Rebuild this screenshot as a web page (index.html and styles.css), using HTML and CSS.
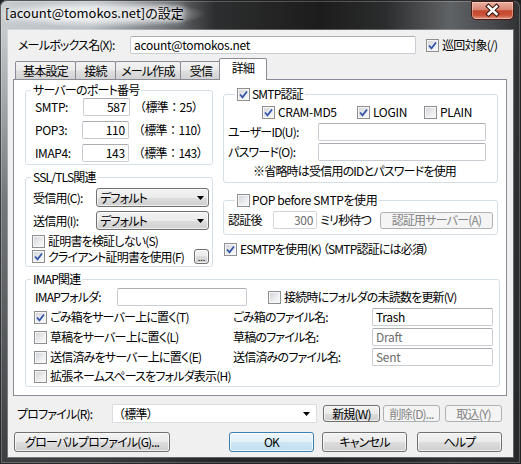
FILE: index.html
```html
<!DOCTYPE html>
<html lang="ja">
<head>
<meta charset="utf-8">
<title>設定</title>
<link rel="stylesheet" href="styles.css">
</head>
<body>
<div class="window">
  <div class="titlebar">
    <span class="title">[acount@tomokos.net]の設定</span>
    <span class="close"><svg width="41" height="17" viewBox="0 0 41 17"><path class="x-out" d="M16.5 4.5 L24.5 12 M24.5 4.5 L16.5 12"/><path class="x-in" d="M16.5 4.5 L24.5 12 M24.5 4.5 L16.5 12"/></svg></span>
  </div>
  <div class="client">
    <div class="mailbox">
      <span class="mb-label">メールボックス名(X):</span>
      <span class="edit mb-edit">acount@tomokos.net</span>
      <span class="check mb-check"><span class="cb on"><svg width="11" height="11" viewBox="0 0 11 11"><path d="M2 5.5 L4.5 8.3 L9 2.5"/></svg></span>巡回対象(/)</span>
    </div>
    <div class="tabs">
      <span class="tab t1">基本設定</span>
      <span class="tab t2">接続</span>
      <span class="tab t3">メール作成</span>
      <span class="tab t4">受信</span>
      <span class="tab sel">詳細</span>
    </div>
    <div class="panel">
      <div class="cols">
        <div class="col-left">
          <fieldset class="group g-port">
            <legend>サーバーのポート番号</legend>
            <div class="prow"><span class="plabel">SMTP:</span><span class="edit pnum">587</span><span class="std">（標準：25）</span></div>
            <div class="prow"><span class="plabel">POP3:</span><span class="edit pnum">110</span><span class="std">（標準：110）</span></div>
            <div class="prow"><span class="plabel">IMAP4:</span><span class="edit pnum">143</span><span class="std">（標準：143）</span></div>
          </fieldset>
          <fieldset class="group g-ssl">
            <legend>SSL/TLS関連</legend>
            <div class="srow"><span class="slabel">受信用(C):</span><span class="dropdown"><span>デフォルト</span><svg width="7" height="4" viewBox="0 0 7 4"><path d="M0 0 H7 L3.5 4 Z"/></svg></span></div>
            <div class="srow"><span class="slabel">送信用(I):</span><span class="dropdown"><span>デフォルト</span><svg width="7" height="4" viewBox="0 0 7 4"><path d="M0 0 H7 L3.5 4 Z"/></svg></span></div>
            <div class="check crow"><span class="cb"></span>証明書を検証しない(S)</div>
            <div class="crow2">
              <span class="check"><span class="cb on"><svg width="11" height="11" viewBox="0 0 11 11"><path d="M2 5.5 L4.5 8.3 L9 2.5"/></svg></span>クライアント証明書を使用(F)</span>
              <span class="btn dots">...</span>
            </div>
          </fieldset>
        </div>
        <div class="col-right">
          <fieldset class="group g-smtp">
            <legend class="cbleg"><span class="cb on"><svg width="11" height="11" viewBox="0 0 11 11"><path d="M2 5.5 L4.5 8.3 L9 2.5"/></svg></span>SMTP認証</legend>
            <div class="authrow">
              <span class="check a1"><span class="cb on"><svg width="11" height="11" viewBox="0 0 11 11"><path d="M2 5.5 L4.5 8.3 L9 2.5"/></svg></span>CRAM-MD5</span>
              <span class="check a2"><span class="cb on"><svg width="11" height="11" viewBox="0 0 11 11"><path d="M2 5.5 L4.5 8.3 L9 2.5"/></svg></span>LOGIN</span>
              <span class="check"><span class="cb"></span>PLAIN</span>
            </div>
            <div class="urow u1"><span class="ulabel">ユーザーID(U):</span><span class="edit uedit"></span></div>
            <div class="urow u2"><span class="ulabel">パスワード(O):</span><span class="edit uedit"></span></div>
            <div class="note">※省略時は受信用のIDとパスワードを使用</div>
          </fieldset>
          <fieldset class="group g-pop">
            <legend class="cbleg"><span class="cb"></span>POP before SMTPを使用</legend>
            <div class="poprow">
              <span class="poplabel">認証後</span>
              <span class="edit dis popnum">300</span>
              <span class="ms">ミリ秒待つ</span>
              <span class="btn dis authsrv">認証用サーバー(A)</span>
            </div>
          </fieldset>
          <div class="check esmtp"><span class="cb on"><svg width="11" height="11" viewBox="0 0 11 11"><path d="M2 5.5 L4.5 8.3 L9 2.5"/></svg></span>ESMTPを使用(K) （SMTP認証には必須）</div>
        </div>
      </div>
      <fieldset class="group g-imap">
        <legend>IMAP関連</legend>
        <div class="irow">
          <span class="ilabel">IMAPフォルダ:</span>
          <span class="edit ifolder"></span>
          <span class="check ichk"><span class="cb"></span>接続時にフォルダの未読数を更新(V)</span>
        </div>
        <div class="irow">
          <span class="check icol1"><span class="cb on"><svg width="11" height="11" viewBox="0 0 11 11"><path d="M2 5.5 L4.5 8.3 L9 2.5"/></svg></span>ごみ箱をサーバー上に置く(T)</span>
          <span class="icol2">ごみ箱のファイル名:</span>
          <span class="edit icol3">Trash</span>
        </div>
        <div class="irow">
          <span class="check icol1"><span class="cb"></span>草稿をサーバー上に置く(L)</span>
          <span class="icol2">草稿のファイル名:</span>
          <span class="edit icol3 gray">Draft</span>
        </div>
        <div class="irow">
          <span class="check icol1"><span class="cb"></span>送信済みをサーバー上に置く(E)</span>
          <span class="icol2">送信済みのファイル名:</span>
          <span class="edit icol3 gray">Sent</span>
        </div>
        <div class="irow last">
          <span class="check icol1"><span class="cb"></span>拡張ネームスペースをフォルダ表示(H)</span>
        </div>
      </fieldset>
    </div>
    <div class="profile">
      <span class="pf-label">プロファイル(R):</span>
      <span class="combo"><span>（標準）</span><svg width="7" height="4" viewBox="0 0 7 4"><path d="M0 0 H7 L3.5 4 Z"/></svg></span>
      <span class="btn sbtn b-new">新規(W)</span>
      <span class="btn sbtn dis b-del">削除(D)...</span>
      <span class="btn sbtn dis b-imp">取込(Y)</span>
    </div>
    <div class="buttons">
      <span class="btn b-global">グローバルプロファイル(G)...</span>
      <span class="btn def b-ok">OK</span>
      <span class="btn b-cancel">キャンセル</span>
      <span class="btn b-help">ヘルプ</span>
    </div>
  </div>
</div>
</body>
</html>
```

FILE: styles.css
```css
* { box-sizing: border-box; }
html, body { margin: 0; padding: 0; }
body {
  width: 521px;
  height: 464px;
  overflow: hidden;
  background: #1e1f20;
  font-family: "Noto Sans CJK JP", "Noto Sans", sans-serif;
  font-size: 12px;
  line-height: 14px;
  letter-spacing: -0.8px;
  color: #000;
  font-feature-settings: "palt";
}

/* ---------- window frame ---------- */
.window {
  width: 521px;
  height: 464px;
  display: flex;
  flex-direction: column;
  padding: 0 8px 7px 8px;
  border-radius: 7px 7px 0 0;
  background:
    linear-gradient(to bottom, rgba(36,38,40,0) 30px, rgba(36,38,40,.5) 200px, rgba(36,38,40,.85) 464px),
    linear-gradient(to right, #c5cace 0, #b9bfc4 90px, #777b7f 160px, #2d2e2f 215px, #1c1c1c 320px, #2b2c2d 385px, #606365 450px, #45474a 495px, #2e3032 521px);
  box-shadow: inset 0 0 0 1px rgba(0,0,0,.6), inset 0 0 0 2px rgba(255,255,255,.22);
}
.titlebar {
  height: 30px;
  flex: none;
  display: flex;
  justify-content: space-between;
  align-items: flex-start;
  margin: 0 -1px 0 -8px;
}
.title {
  padding: 5px 22px 7px 5px;
  font-size: 13px;
  letter-spacing: 0;
  line-height: 16px;
  white-space: nowrap;
  background: radial-gradient(farthest-side, rgba(255,255,255,.6) 50%, rgba(255,255,255,0) 100%);
  text-shadow: 0 0 4px #fff, 0 0 8px #fff, 0 0 12px #fff;
}
.close {
  width: 43px;
  height: 19px;
  margin-top: 1px;
  display: flex;
  border: 1px solid #4a1a12;
  border-radius: 0 0 5px 5px;
  background: linear-gradient(#eab0a2 0%, #d98672 45%, #c4462e 52%, #c9533a 78%, #e39a83 100%);
  box-shadow: inset 0 0 0 1px rgba(255,255,255,.35);
}
.close svg { display: block; }
.x-out { fill: none; stroke: #3b1a14; stroke-width: 4.6; stroke-linecap: square; }
.x-in { fill: none; stroke: #fff; stroke-width: 2.4; stroke-linecap: square; }

/* ---------- client ---------- */
.client {
  flex: 1;
  display: flex;
  flex-direction: column;
  background: #f0f0f0;
  box-shadow: 0 0 0 1px rgba(255,255,255,.28);
}
.mailbox {
  display: flex;
  align-items: center;
  height: 18px;
  margin-top: 6px;
}
.mb-label { width: 122px; padding-left: 10px; white-space: nowrap; }
.mb-edit { width: 286px; letter-spacing: -0.3px; }
.mb-check { margin-left: 10px; }

/* ---------- controls ---------- */
.edit {
  display: flex;
  align-items: center;
  flex: none;
  height: 18px;
  padding: 0 3px;
  background: #fff;
  border: 1px solid #c9ccd2;
  border-top-color: #abadb3;
  border-radius: 2px;
  white-space: nowrap;
}
.edit.gray { color: #6d6d6d; }
.edit.dis { color: #6d6d6d; border-color: #d3d6db; }

.check { display: flex; align-items: center; white-space: nowrap; }
.cb {
  width: 13px;
  height: 13px;
  flex: none;
  margin-right: 3px;
  display: flex;
  align-items: center;
  justify-content: center;
  border: 1px solid #8f8f8f;
  background: linear-gradient(135deg, #cfd2d6 0%, #eceef0 60%, #fbfbfb 100%);
  box-shadow: inset 0 0 0 1px #f6f6f6;
}
.cb svg { display: block; }
.cb path { fill: none; stroke: #3556a8; stroke-width: 1.8; stroke-linejoin: miter; }

.btn {
  display: flex;
  align-items: center;
  justify-content: center;
  flex: none;
  white-space: nowrap;
  border: 1px solid #707070;
  border-radius: 3px;
  background: linear-gradient(#f2f2f2 0%, #ebebeb 50%, #dddddd 50%, #cfcfcf 100%);
  box-shadow: inset 0 0 0 1px rgba(255,255,255,.65);
}
.btn.dis {
  border-color: #adb2b5;
  background: #f4f4f4;
  color: #838383;
  box-shadow: none;
}
.btn.def {
  border-color: #3c7fb1;
  background: linear-gradient(#eef6fb 0%, #e1eff8 50%, #cfe6f4 50%, #c2def0 100%);
  box-shadow: inset 0 0 0 1px rgba(255,255,255,.7);
}

.dropdown {
  width: 113px;
  height: 19px;
  flex: none;
  display: flex;
  align-items: center;
  justify-content: space-between;
  padding: 0 4px 0 3px;
  border: 1px solid #707070;
  border-radius: 3px;
  background: linear-gradient(#f2f2f2 0%, #ebebeb 50%, #dddddd 50%, #cfcfcf 100%);
  box-shadow: inset 0 0 0 1px rgba(255,255,255,.65);
}
.dropdown svg, .combo svg { display: block; }

/* ---------- tabs ---------- */
.tabs {
  display: flex;
  align-items: flex-end;
  height: 22px;
  margin: 4px 0 -1px 7px;
  position: relative;
  z-index: 1;
}
.tab {
  height: 18px;
  margin-bottom: 1px;
  margin-left: -1px;
  display: flex;
  align-items: center;
  justify-content: center;
  border: 1px solid #898c95;
  border-bottom: none;
  border-radius: 2px 2px 0 0;
  background: linear-gradient(#f3f3f3 0%, #ebebeb 45%, #dedede 55%, #d3d3d3 100%);
  white-space: nowrap;
}
.t1 { width: 61px; margin-left: 0; }
.t2 { width: 41px; }
.t3 { width: 66px; }
.t4 { width: 42px; }
.tab.sel {
  width: 48px;
  height: 22px;
  margin-bottom: 0;
  margin-left: -3px;
  padding-bottom: 3px;
  background: #fff;
  position: relative;
  z-index: 2;
}

/* ---------- panel ---------- */
.panel {
  margin-left: 5px;
  width: 494px;
  height: 317px;
  flex: none;
  border: 1px solid #898c95;
  background: #fff;
  padding: 0 7px 0 11px;
}
.cols { display: flex; align-items: flex-start; }
.col-left { width: 188px; margin-top: 3px; display: flex; flex-direction: column; }
.col-right { width: 275px; margin-left: 10px; margin-top: 7px; display: flex; flex-direction: column; }

.group {
  margin: 0;
  min-width: 0;
  border: 1px solid #d5dfe5;
  border-radius: 3px;
}
.group legend {
  padding: 0 2px;
  height: 14px;
  line-height: 14px;
  white-space: nowrap;
}
.group legend.cbleg { display: flex; align-items: center; margin-left: 7px; }
.cbleg .cb { margin-right: 2px; }
.g-pop legend.cbleg { letter-spacing: -0.4px; }

/* port group */
.g-port { padding: 1px 4px 2px 9px; }
.g-port legend { margin-left: -4px; }
.prow { display: flex; align-items: center; height: 18px; }
.prow + .prow { margin-top: 5px; }
.plabel { width: 48px; letter-spacing: -0.4px; }
.pnum { width: 47px; justify-content: flex-end; letter-spacing: -0.3px; }
.std { margin-left: 4px; font-feature-settings: normal; letter-spacing: -0.6px; white-space: nowrap; }

/* ssl group */
.g-ssl { margin-top: 5px; padding: 4px 3px 2px 7px; }
.g-ssl legend { margin-left: -2px; }
.srow { display: flex; align-items: center; height: 19px; }
.srow + .srow { margin-top: 4px; }
.slabel { width: 63px; white-space: nowrap; }
.crow { height: 14px; margin-top: 4px; margin-left: -1px; }
.crow2 { display: flex; align-items: center; justify-content: space-between; height: 15px; margin-top: 1px; margin-left: -1px; }
.dots { width: 15px; height: 15px; font-size: 9px; line-height: 9px; padding-top: 2px; letter-spacing: 0; }

/* smtp group */
.g-smtp { padding: 4px 4px 4px 4px; }
.authrow { display: flex; align-items: center; height: 14px; padding-left: 34px; letter-spacing: -0.3px; }
.a1 { width: 95px; }
.a2 { width: 67px; }
.urow { display: flex; align-items: center; height: 18px; }
.u1 { margin-top: 4px; }
.u2 { margin-top: 2px; }
.ulabel { width: 90px; white-space: nowrap; }
.uedit { width: 168px; }
.note { height: 14px; margin-top: 3px; padding-left: 25px; white-space: nowrap; }

/* pop group */
.g-pop { margin-top: 10px; padding: 4px 4px 5px 4px; }
.poprow { display: flex; align-items: center; height: 18px; }
.poplabel { width: 45px; }
.popnum { width: 44px; justify-content: flex-end; letter-spacing: -0.3px; }
.ms { margin-left: 3px; white-space: nowrap; }
.authsrv { margin-left: auto; width: 113px; height: 17px; }

.esmtp { height: 14px; margin-top: 7px; margin-left: 1px; }

/* imap group */
.g-imap { width: 475px; margin-top: 5px; padding: 1px 4px 1px 9px; }
.g-imap legend { margin-left: -4px; }
.irow { display: flex; align-items: center; height: 20px; }
.irow.last { height: 18px; }
.ilabel { width: 82px; white-space: nowrap; }
.ifolder { width: 130px; }
.ichk { margin-left: 21px; }
.icol1 { width: 199px; margin-left: -1px; }
.icol2 { width: 139px; white-space: nowrap; }
.icol3 { width: 121px; letter-spacing: -0.3px; }

/* ---------- bottom rows ---------- */
.profile { display: flex; align-items: center; height: 19px; margin-top: 8px; }
.pf-label { width: 104px; padding-left: 9px; white-space: nowrap; }
.combo {
  width: 205px;
  height: 19px;
  flex: none;
  display: flex;
  align-items: center;
  justify-content: space-between;
  padding: 0 6px 0 0;
  background: #fff;
  border: 1px solid #dadde2;
  font-feature-settings: normal;
}
.sbtn { width: 57px; height: 17px; }
.b-new { margin-left: 6px; }
.b-del { margin-left: 3px; }
.b-imp { margin-left: 5px; }

.buttons { display: flex; height: 20px; margin-top: 9px; }
.b-global { width: 156px; margin-left: 6px; }
.b-ok { width: 85px; margin-left: 59px; }
.b-cancel { width: 85px; margin-left: 8px; }
.b-help { width: 85px; margin-left: 10px; }
```
